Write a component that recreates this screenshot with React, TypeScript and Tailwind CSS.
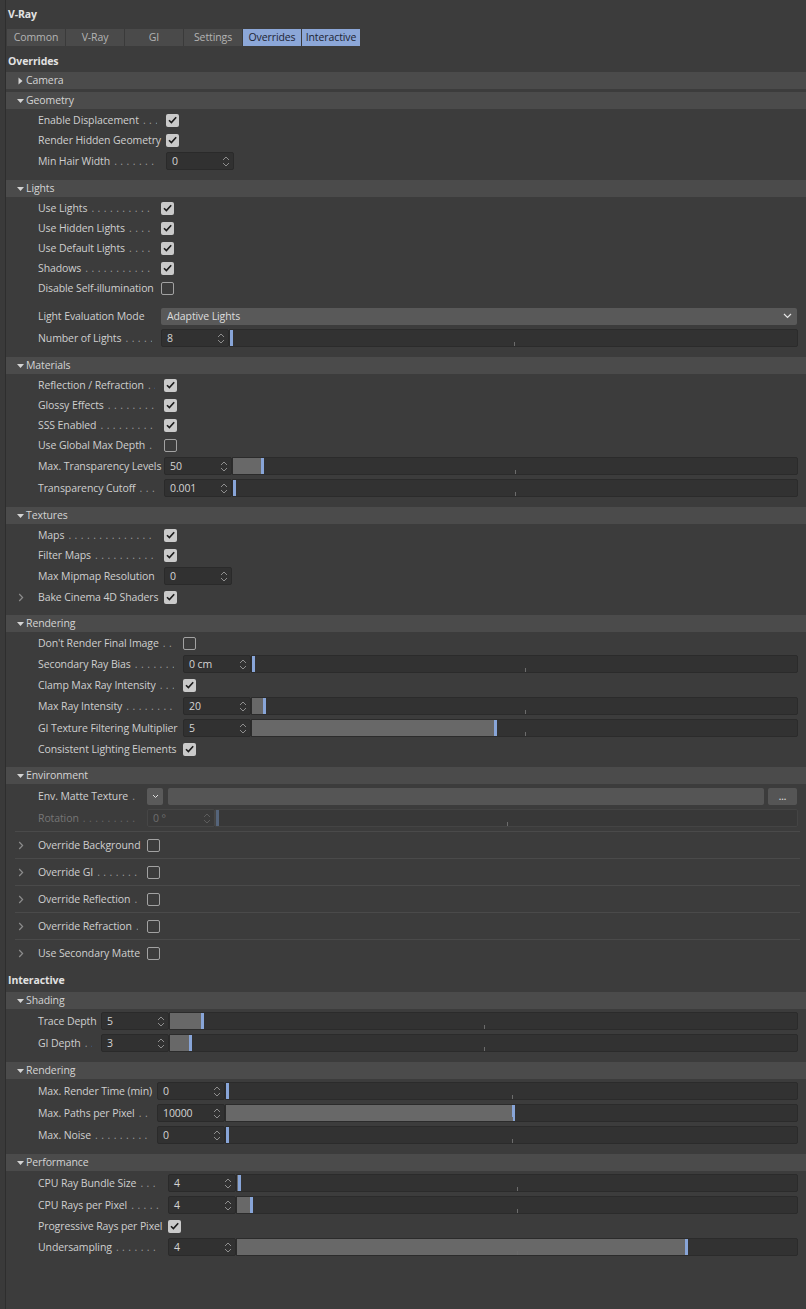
import React from 'react';

const DOTS = '\u00a0.\u00a0.\u00a0.\u00a0.\u00a0.\u00a0.\u00a0.\u00a0.\u00a0.\u00a0.\u00a0.\u00a0.\u00a0.\u00a0.\u00a0.\u00a0.\u00a0.\u00a0.\u00a0.\u00a0.\u00a0.\u00a0.\u00a0.\u00a0.\u00a0.\u00a0.\u00a0.\u00a0.\u00a0.\u00a0.\u00a0.\u00a0.\u00a0.\u00a0.';

function TriDown() {
  return (
    <svg width="7" height="6" viewBox="0 0 7 6" className="shrink-0">
      <path d="M0 1 L7 1 L3.5 5 Z" fill="#d4d4d4" />
    </svg>
  );
}

function TriRight() {
  return (
    <svg width="7" height="8" viewBox="0 0 7 8" className="shrink-0">
      <path d="M1.5 0.5 L5.5 4 L1.5 7.5 Z" fill="#d4d4d4" />
    </svg>
  );
}

function Chevron() {
  return (
    <svg width="6" height="9" viewBox="0 0 6 9" className="shrink-0">
      <path d="M1.2 1 L4.6 4.5 L1.2 8" stroke="#8c8c8c" strokeWidth="1.2" fill="none" />
    </svg>
  );
}

function Spinner({ dim = false }: { dim?: boolean }) {
  const c = dim ? '#5c5c5c' : '#8e8e8e';
  return (
    <svg width="8" height="13" viewBox="0 0 8 13" className="shrink-0">
      <path d="M1 5 L4 2 L7 5" stroke={c} strokeWidth="1" fill="none" />
      <path d="M1 8 L4 11 L7 8" stroke={c} strokeWidth="1" fill="none" />
    </svg>
  );
}

function Check({ on }: { on: boolean }) {
  return on ? (
    <div className="w-[13px] h-[13px] shrink-0 rounded-[2px] bg-[#cacaca] flex items-center justify-center">
      <svg width="9" height="8" viewBox="0 0 9 8">
        <path d="M1 4.2 L3.4 6.6 L8.2 1.2" stroke="#1c1c1c" strokeWidth="1.6" fill="none" />
      </svg>
    </div>
  ) : (
    <div className="w-[13px] h-[13px] shrink-0 rounded-[2px] border border-[#a2a2a2]" />
  );
}

function NumField({ value, dim = false }: { value: string; dim?: boolean }) {
  return (
    <div
      className={`h-[18px] w-[68px] shrink-0 rounded-[2px] border flex items-center justify-between pl-[5px] pr-[3px] ${
        dim ? 'bg-[#3a3a3a] border-[#464646] text-[#6e6e6e]' : 'bg-[#313131] border-[#2a2a2a] text-[#d4d4d4]'
      }`}
    >
      <span className="whitespace-nowrap">{value}</span>
      <Spinner dim={dim} />
    </div>
  );
}

function Slider({ frac, dim = false }: { frac: number; dim?: boolean }) {
  const pct = `${frac * 100}%`;
  return (
    <div
      className={`relative flex-1 h-[18px] border rounded-r-[2px] mr-[8px] ${
        dim ? 'bg-[#383838] border-[#444444]' : 'bg-[#323232] border-[#2b2b2b]'
      }`}
    >
      {!dim && <div className="absolute left-0 top-0 bottom-0 bg-[#686868]" style={{ width: pct }} />}
      <div
        className={`absolute top-0 bottom-0 w-[3px] ${dim ? 'bg-[#55647a]' : 'bg-[#88a5d8]'}`}
        style={{ left: pct }}
      />
      <div className="absolute bottom-0 left-1/2 w-px h-[4px] bg-[#6c6c6c]" />
    </div>
  );
}

function Row({
  label,
  lw,
  h = 'h-[20px]',
  dim = false,
  chevron = false,
  dots = true,
  children,
}: {
  label: string;
  lw: string;
  h?: string;
  dim?: boolean;
  chevron?: boolean;
  dots?: boolean;
  children?: React.ReactNode;
}) {
  return (
    <div className={`flex items-center ${h}`}>
      <div className="w-[32px] shrink-0 flex items-center pl-[12px]">{chevron && <Chevron />}</div>
      <div className={`${lw} shrink-0 flex items-center pr-[9px]`}>
        <span className={`whitespace-nowrap shrink-0 ${dim ? 'text-[#767676]' : 'text-[#cfcfcf]'}`}>{label}</span>
        {dots && (
          <span
            className={`flex-1 min-w-0 overflow-hidden whitespace-nowrap ml-[1px] tracking-[0.35px] ${dim ? 'text-[#666666]' : 'text-[#9a9a9a]'}`}
          >
            {DOTS}
          </span>
        )}
      </div>
      {children}
    </div>
  );
}

function CbRow({ label, lw, on, chevron = false, dots = true }: { label: string; lw: string; on: boolean; chevron?: boolean; dots?: boolean }) {
  return (
    <Row label={label} lw={lw} chevron={chevron} dots={dots}>
      <Check on={on} />
    </Row>
  );
}

function SliderRow({ label, lw, value, frac, dots = true }: { label: string; lw: string; value: string; frac: number; dots?: boolean }) {
  return (
    <Row label={label} lw={lw} h="h-[22px]" dots={dots}>
      <NumField value={value} />
      <Slider frac={frac} />
    </Row>
  );
}

function Header({ title, open = true }: { title: string; open?: boolean }) {
  return (
    <div className="h-[17px] bg-[#4b4b4b] flex items-center pl-[11px] text-[#d4d4d4]">
      <div className="w-[7px] flex items-center">{open ? <TriDown /> : <TriRight />}</div>
      <span className="ml-[2px]">{title}</span>
    </div>
  );
}

function Section({ title, children }: { title: string; children: React.ReactNode }) {
  return (
    <div className="mt-[3px]">
      <Header title={title} />
      <div className="pt-[1px] pb-[5px] flex flex-col">{children}</div>
    </div>
  );
}

function OverrideRow({ label }: { label: string }) {
  return (
    <div className="ml-[9px] mr-[6px] border-t border-[#4a4a4a] h-[27px] flex items-center">
      <div className="w-[23px] shrink-0 flex items-center pl-[3px]">
        <Chevron />
      </div>
      <div className="w-[109px] shrink-0 flex items-center pr-[9px]">
        <span className="whitespace-nowrap shrink-0 text-[#cfcfcf]">{label}</span>
        <span className="flex-1 min-w-0 overflow-hidden whitespace-nowrap ml-[1px] tracking-[0.35px] text-[#9a9a9a]">{DOTS}</span>
      </div>
      <Check on={false} />
    </div>
  );
}

function Tab({ label, active = false }: { label: string; active?: boolean }) {
  return (
    <div
      className={`w-[58px] h-full flex items-center justify-center ${
        active ? 'bg-[#8ca7d8] text-[#1c2433]' : 'bg-[#4a4a4a] text-[#b4b4b4]'
      }`}
    >
      {label}
    </div>
  );
}

export default function App() {
  return (
    <div className="w-[806px] min-h-[1309px] bg-[#3c3c3c] flex font-['Open_Sans',sans-serif] text-[10.5px] tracking-[-0.1px] leading-none select-none">
      <div className="w-[6px] shrink-0 bg-[#3a3a3a] border-r border-[#2e2e2e]" />
      <div className="flex-1 flex flex-col">
        <div className="h-[18px] mt-[5px] pl-[2px] flex items-center font-bold text-[#e2e2e2]">V-Ray</div>
        <div className="mt-[6px] ml-[1px] h-[17px] flex gap-px self-start bg-[#3a3a3a]">
          <Tab label="Common" />
          <Tab label="V-Ray" />
          <Tab label="GI" />
          <Tab label="Settings" />
          <Tab label="Overrides" active />
          <Tab label="Interactive" active />
        </div>
        <div className="h-[18px] mt-[6px] pl-[2px] flex items-center font-bold text-[#e2e2e2]">Overrides</div>

        <div className="mt-[2px]">
          <Header title="Camera" open={false} />
        </div>

        <Section title="Geometry">
          <CbRow label="Enable Displacement" lw="w-[128px]" on />
          <CbRow label="Render Hidden Geometry" lw="w-[128px]" on />
          <Row label="Min Hair Width" lw="w-[128px]" h="h-[22px]">
            <NumField value="0" />
          </Row>
        </Section>

        <Section title="Lights">
          <CbRow label="Use Lights" lw="w-[123px]" on />
          <CbRow label="Use Hidden Lights" lw="w-[123px]" on />
          <CbRow label="Use Default Lights" lw="w-[123px]" on />
          <CbRow label="Shadows" lw="w-[123px]" on />
          <CbRow label="Disable Self-illumination" lw="w-[123px]" on={false} />
          <div className="h-[7px]" />
          <Row label="Light Evaluation Mode" lw="w-[123px]" h="h-[22px]" dots={false}>
            <div className="flex-1 h-[17px] mr-[9px] rounded-[2px] bg-[#595959] flex items-center justify-between pl-[6px] pr-[5px] text-[#dedede]">
              <span>Adaptive Lights</span>
              <svg width="9" height="6" viewBox="0 0 9 6">
                <path d="M1 1 L4.5 4.5 L8 1" stroke="#e6e6e6" strokeWidth="1.2" fill="none" />
              </svg>
            </div>
          </Row>
          <SliderRow label="Number of Lights" lw="w-[123px]" value="8" frac={0} />
        </Section>

        <Section title="Materials">
          <CbRow label="Reflection / Refraction" lw="w-[126px]" on />
          <CbRow label="Glossy Effects" lw="w-[126px]" on />
          <CbRow label="SSS Enabled" lw="w-[126px]" on />
          <CbRow label="Use Global Max Depth" lw="w-[126px]" on={false} />
          <SliderRow label="Max. Transparency Levels" lw="w-[126px]" value="50" frac={0.05} dots={false} />
          <SliderRow label="Transparency Cutoff" lw="w-[126px]" value="0.001" frac={0} />
        </Section>

        <Section title="Textures">
          <CbRow label="Maps" lw="w-[126px]" on />
          <CbRow label="Filter Maps" lw="w-[126px]" on />
          <Row label="Max Mipmap Resolution" lw="w-[126px]" h="h-[22px]" dots={false}>
            <NumField value="0" />
          </Row>
          <CbRow label="Bake Cinema 4D Shaders" lw="w-[126px]" on chevron dots={false} />
        </Section>

        <Section title="Rendering">
          <CbRow label="Don't Render Final Image" lw="w-[145px]" on={false} />
          <SliderRow label="Secondary Ray Bias" lw="w-[145px]" value="0 cm" frac={0} />
          <CbRow label="Clamp Max Ray Intensity" lw="w-[145px]" on />
          <SliderRow label="Max Ray Intensity" lw="w-[145px]" value="20" frac={0.02} />
          <SliderRow label="GI Texture Filtering Multiplier" lw="w-[145px]" value="5" frac={0.444} dots={false} />
          <CbRow label="Consistent Lighting Elements" lw="w-[145px]" on dots={false} />
        </Section>

        <div className="mt-[3px]">
          <Header title="Environment" />
          <div className="pt-[1px] flex flex-col">
            <Row label="Env. Matte Texture" lw="w-[109px]" h="h-[22px]">
              <div className="w-[16px] h-[17px] shrink-0 rounded-[2px] bg-[#5a5a5a] flex items-center justify-center">
                <svg width="7" height="5" viewBox="0 0 7 5">
                  <path d="M1 1 L3.5 3.5 L6 1" stroke="#e0e0e0" strokeWidth="1" fill="none" />
                </svg>
              </div>
              <div className="ml-[5px] flex-1 h-[17px] rounded-[2px] bg-[#555555]" />
              <div className="ml-[4px] mr-[9px] w-[29px] h-[17px] rounded-[2px] bg-[#555555] flex items-center justify-center text-[#d0d0d0] text-[9px] font-bold">
                ...
              </div>
            </Row>
            <Row label="Rotation" lw="w-[109px]" h="h-[22px]" dim>
              <NumField value="0 °" dim />
              <Slider frac={0} dim />
            </Row>
            <div className="h-[2px]" />
            <OverrideRow label="Override Background" />
            <OverrideRow label="Override GI" />
            <OverrideRow label="Override Reflection" />
            <OverrideRow label="Override Refraction" />
            <OverrideRow label="Use Secondary Matte" />
          </div>
        </div>

        <div className="h-[18px] mt-[5px] pl-[2px] flex items-center font-bold text-[#e2e2e2]">Interactive</div>

        <Section title="Shading">
          <SliderRow label="Trace Depth" lw="w-[63px]" value="5" frac={0.05} dots={false} />
          <SliderRow label="GI Depth" lw="w-[63px]" value="3" frac={0.03} />
        </Section>

        <Section title="Rendering">
          <SliderRow label="Max. Render Time (min)" lw="w-[119px]" value="0" frac={0} dots={false} />
          <SliderRow label="Max. Paths per Pixel" lw="w-[119px]" value="10000" frac={0.5} />
          <SliderRow label="Max. Noise" lw="w-[119px]" value="0" frac={0} />
        </Section>

        <Section title="Performance">
          <SliderRow label="CPU Ray Bundle Size" lw="w-[130px]" value="4" frac={0.002} />
          <SliderRow label="CPU Rays per Pixel" lw="w-[130px]" value="4" frac={0.023} />
          <CbRow label="Progressive Rays per Pixel" lw="w-[130px]" on dots={false} />
          <SliderRow label="Undersampling" lw="w-[130px]" value="4" frac={0.8} />
        </Section>
      </div>
    </div>
  );
}
